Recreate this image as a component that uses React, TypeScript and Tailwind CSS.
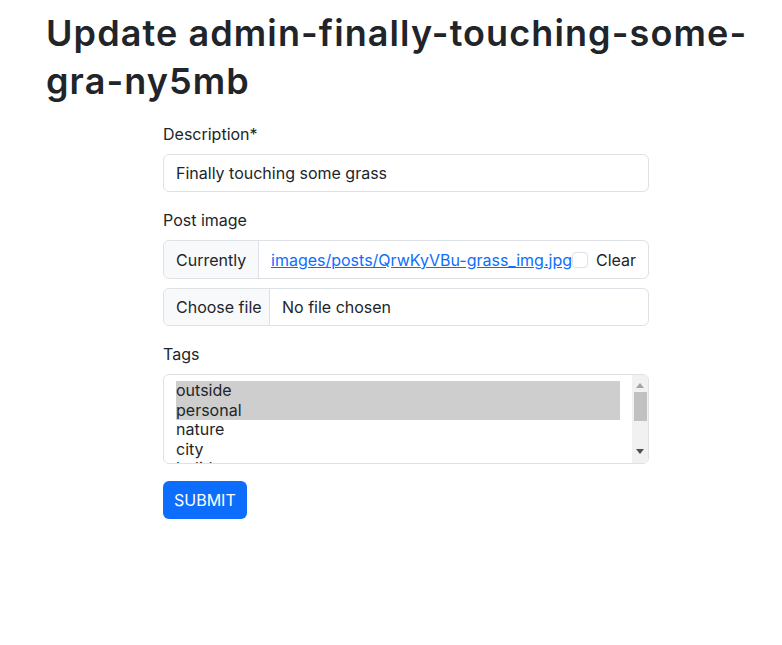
const tags = ["outside", "personal", "nature", "city", "holiday"];
const selected = ["outside", "personal"];

function TagsSelect() {
  return (
    <div className="flex h-[90px] overflow-hidden rounded-md border border-[#dee2e6] bg-white">
      <div className="flex-1 overflow-hidden pl-3 pr-3 pt-[6px]">
        {tags.map((t) => (
          <div
            key={t}
            className={`h-[19.5px] leading-[19.5px] ${selected.includes(t) ? "bg-[#cecece]" : ""}`}
          >
            {t}
          </div>
        ))}
      </div>
      <div className="flex w-[16px] flex-col items-center bg-[#f1f1f1]">
        <div className="flex h-[17px] items-end justify-center pb-[4px]">
          <svg width="8" height="5" viewBox="0 0 8 5">
            <path d="M0 5 L4 0 L8 5 Z" fill="#a3a3a3" />
          </svg>
        </div>
        <div className="h-[29px] w-[13px] bg-[#c1c1c1]" />
        <div className="flex-1" />
        <div className="flex h-[17px] items-start justify-center pt-[3px]">
          <svg width="8" height="5" viewBox="0 0 8 5">
            <path d="M0 0 L8 0 L4 5 Z" fill="#505050" />
          </svg>
        </div>
      </div>
    </div>
  );
}

export default function App() {
  return (
    <div className="min-h-[645px] bg-white font-['Inter','Liberation_Sans',sans-serif] text-base text-[#212529]">
      <div className="pl-[46px] pr-[20px] pt-[9px]">
        <h1 className="text-[36px] font-semibold leading-[48px] tracking-[1.1px]">
          Update admin-finally-touching-some-gra-ny5mb
        </h1>
      </div>

      <form className="ml-[163px] mt-[17px] w-[486px]">
        <label className="mb-2 block leading-6">Description*</label>
        <div className="mb-4 flex h-[38px] items-center rounded-md border border-[#dee2e6] px-3">
          Finally touching some grass
        </div>

        <label className="mb-2 block leading-6">Post image</label>
        <div className="flex h-[39px] rounded-md border border-[#dee2e6]">
          <span className="flex w-[95px] items-center whitespace-nowrap rounded-l-md border-r border-[#dee2e6] bg-[#f8f9fa] px-3">
            Currently
          </span>
          <div className="flex flex-1 items-center whitespace-nowrap pl-3">
            <a href="#" className="text-[#0d6efd] underline">
              images/posts/QrwKyVBu-grass_img.jpg
            </a>
            <span className="h-4 w-4 shrink-0 rounded border border-[#dee2e6] bg-white" />
            <span className="ml-2">Clear</span>
          </div>
        </div>
        <div className="mb-4 mt-[9px] flex h-[38px] rounded-md border border-[#dee2e6]">
          <span className="flex w-[106px] shrink-0 items-center whitespace-nowrap rounded-l-md border-r border-[#dee2e6] bg-[#f8f9fa] px-3">
            Choose file
          </span>
          <span className="flex items-center whitespace-nowrap pl-3">No file chosen</span>
        </div>

        <label className="mb-2 block leading-6">Tags</label>
        <TagsSelect />

        <button
          type="button"
          className="mt-[17px] h-[38px] rounded-md bg-[#0d6efd] px-[11px] text-white"
        >
          SUBMIT
        </button>
      </form>
    </div>
  );
}
